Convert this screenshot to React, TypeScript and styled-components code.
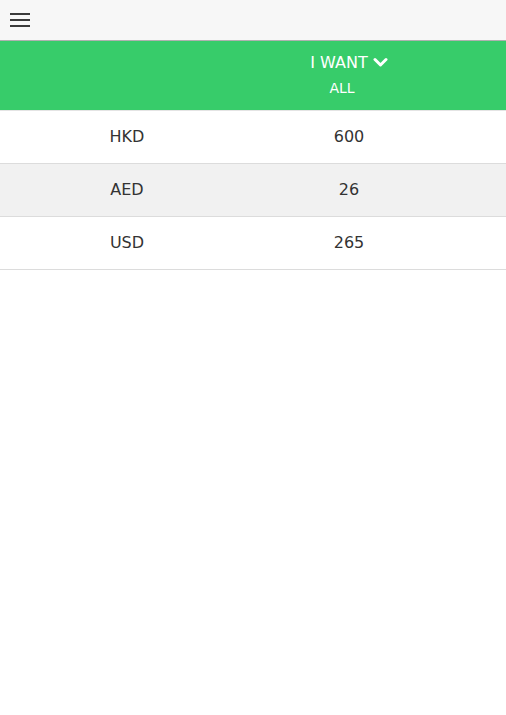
import React from "react";
import styled, { createGlobalStyle } from "styled-components";

const Global = createGlobalStyle`
  html, body { margin: 0; padding: 0; background: #fff; }
  body { font-family: "DejaVu Sans", "Noto Sans", sans-serif; color: #333; }
`;

const TopBar = styled.header`
  height: 40px;
  background: #f7f7f7;
  border-bottom: 1px solid #b0b0b0;
  display: flex;
  align-items: center;
  padding-left: 10px;
`;

const MenuButton = styled.button`
  width: 22px;
  height: 22px;
  padding: 0;
  border: none;
  background: none;
  display: flex;
  flex-direction: column;
  justify-content: center;
  gap: 4px;
  cursor: pointer;
`;

const MenuLine = styled.span`
  display: block;
  width: 20px;
  height: 2px;
  background: #3a3a3a;
`;

const Grid = styled.div`
  display: grid;
  grid-template-columns: 254px 190px 1fr;
`;

const HeadRow = styled(Grid)`
  background: #37cc6a;
  height: 69px;
  color: #fff;
  border-bottom: 1px solid #e4e4e4;
`;

const HeadCell = styled.div`
  display: flex;
  flex-direction: column;
  align-items: center;
  justify-content: center;
  gap: 8px;
`;

const HeadTitle = styled.div`
  font-size: 16px;
  display: flex;
  align-items: center;
  gap: 5px;
  margin-top: -3px;
`;

const HeadSub = styled.div`
  font-size: 14px;
  margin-right: 14px;
`;

const Row = styled(Grid)<{ $alt?: boolean }>`
  height: 52px;
  border-bottom: 1px solid #dcdcdc;
  background: ${(p) => (p.$alt ? "#f1f1f1" : "#fff")};
  font-size: 16px;
  color: #333;
`;

const Cell = styled.div`
  display: flex;
  align-items: center;
  justify-content: center;
  padding-bottom: 2px;
`;

const rows = [
  { cur: "HKD", amt: "600" },
  { cur: "AED", amt: "26" },
  { cur: "USD", amt: "265" },
];

export default function App() {
  return (
    <>
      <Global />
      <TopBar>
        <MenuButton aria-label="menu">
          <MenuLine />
          <MenuLine />
          <MenuLine />
        </MenuButton>
      </TopBar>
      <HeadRow>
        <HeadCell />
        <HeadCell>
          <HeadTitle>
            I WANT
            <svg width="15" height="11" viewBox="0 0 15 11">
              <path d="M2 2.5 L7.5 8 L13 2.5" stroke="#fff" strokeWidth="3" fill="none" strokeLinecap="round" strokeLinejoin="round" />
            </svg>
          </HeadTitle>
          <HeadSub>ALL</HeadSub>
        </HeadCell>
        <HeadCell />
      </HeadRow>
      {rows.map((r, i) => (
        <Row key={r.cur} $alt={i % 2 === 1}>
          <Cell>{r.cur}</Cell>
          <Cell>{r.amt}</Cell>
          <Cell />
        </Row>
      ))}
    </>
  );
}
